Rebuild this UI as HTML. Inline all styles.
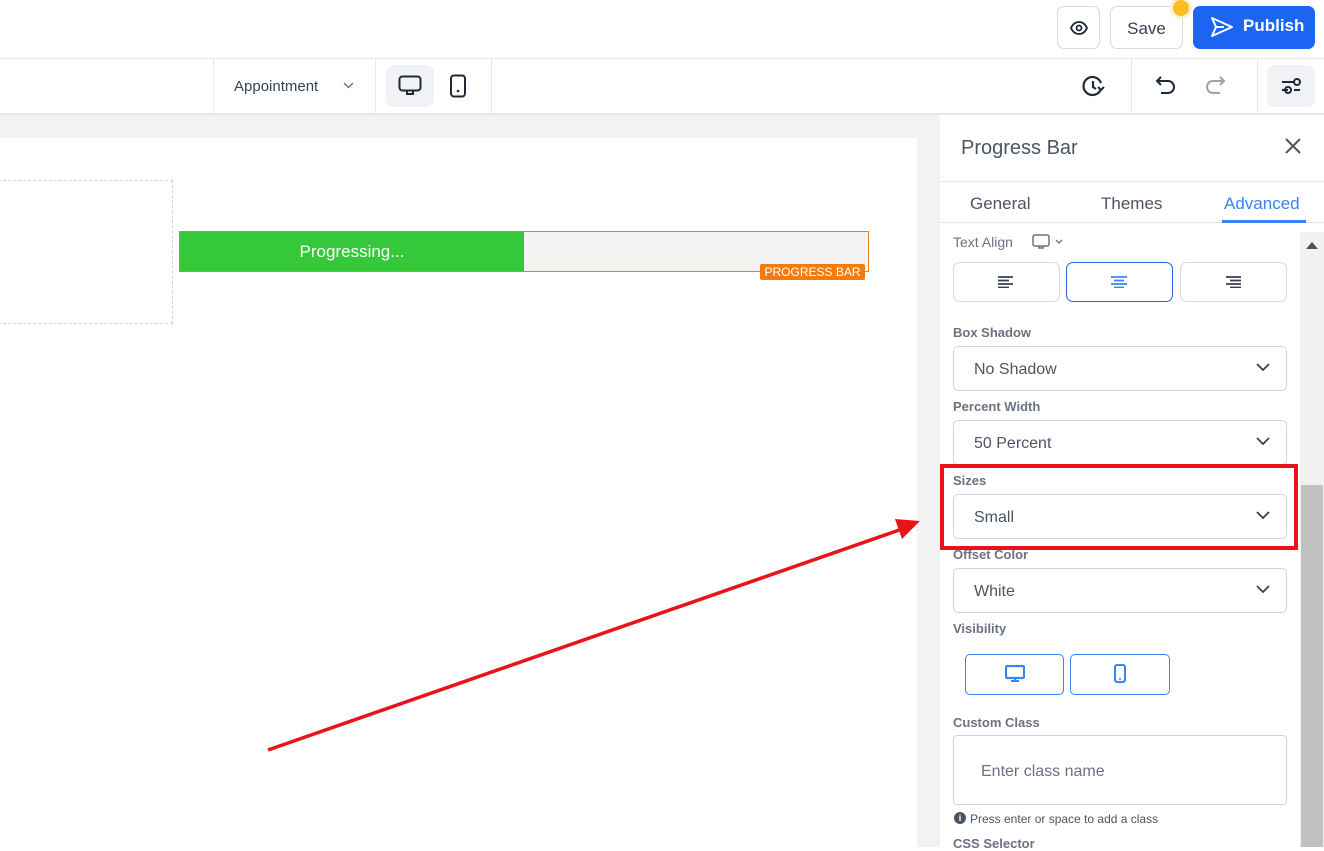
<!DOCTYPE html>
<html><head><style>
*{box-sizing:border-box;margin:0;padding:0}
body{width:1324px;height:847px;overflow:hidden;font-family:"Liberation Sans",sans-serif;background:#fff;position:relative;color:#374151}
.abs{position:absolute}
.lbl{position:absolute;left:953px;font-size:13px;font-weight:bold;color:#6b7280}
.sel{position:absolute;left:953px;width:334px;height:45px;border:1px solid #d1d5db;border-radius:5px;font-size:16px;color:#4b5563;padding:14px 0 0 20px}
.sel svg{position:absolute;right:16px;top:16px}
.ab{position:absolute;top:262px;width:107px;height:40px;border:1px solid #d6d9de;border-radius:7px}
</style></head><body>
<div class="abs" style="left:0;top:58px;width:1324px;height:1px;background:#e5e7eb"></div>
<div class="abs" style="left:1057px;top:6px;width:43px;height:43px;border:1px solid #d6d9de;border-radius:7px"><svg style="position:absolute;left:12px;top:13px" width="18" height="16" viewBox="0 0 18 16"><path d="M1 8C3 3.5 6 2 9 2s6 1.5 8 6c-2 4.5-5 6-8 6s-6-1.5-8-6z" fill="none" stroke="#1f2937" stroke-width="1.8"/><circle cx="9" cy="8" r="2.5" fill="none" stroke="#1f2937" stroke-width="1.8"/></svg></div>
<div class="abs" style="left:1110px;top:6px;width:73px;height:43px;border:1px solid #d6d9de;border-radius:7px;font-size:17px;color:#374151;text-align:center;line-height:43px">Save</div>
<div class="abs" style="left:1173px;top:0;width:16px;height:16px;border-radius:50%;background:#fbbf24;box-shadow:0 0 0 3px #fdf0d0"></div>
<div class="abs" style="left:1193px;top:6px;width:122px;height:43px;background:#1c64f2;border-radius:7px;color:#fff;font-size:17px;font-weight:bold;line-height:40px;padding-left:50px">Publish</div>
<svg class="abs" style="left:1210px;top:16px" width="24" height="22" viewBox="0 0 24 22"><path d="M2 2l20 9-20 9 4-9z M6 11h8" fill="none" stroke="#fff" stroke-width="2" stroke-linejoin="round"/></svg>
<div class="abs" style="left:0;top:113px;width:1324px;height:2px;background:#e5e7eb"></div>
<div class="abs" style="left:213px;top:59px;width:1px;height:54px;background:#e5e7eb"></div>
<div class="abs" style="left:375px;top:59px;width:1px;height:54px;background:#e5e7eb"></div>
<div class="abs" style="left:491px;top:59px;width:1px;height:54px;background:#e5e7eb"></div>
<div class="abs" style="left:1131px;top:59px;width:1px;height:54px;background:#e5e7eb"></div>
<div class="abs" style="left:1257px;top:59px;width:1px;height:54px;background:#e5e7eb"></div>
<div class="abs" style="left:234px;top:78px;font-size:15px;color:#374151">Appointment</div>
<svg class="abs" style="left:343px;top:82px" width="11" height="7"><path d="M1 1l4.5 4.5L10 1" fill="none" stroke="#6b7280" stroke-width="1.4"/></svg>
<div class="abs" style="left:386px;top:65px;width:48px;height:42px;background:#f1f2f5;border-radius:8px"></div>
<svg class="abs" style="left:398px;top:75px" width="24" height="22"><rect x="1.5" y="1.5" width="21" height="14" rx="3" fill="none" stroke="#1f2937" stroke-width="2"/><path d="M9 16v3h6v-3" fill="none" stroke="#1f2937" stroke-width="2"/></svg>
<svg class="abs" style="left:449px;top:74px" width="18" height="24"><rect x="2" y="1.5" width="14" height="21" rx="3" fill="none" stroke="#1f2937" stroke-width="2"/><circle cx="9" cy="17" r="1.3" fill="#1f2937"/></svg>
<svg class="abs" style="left:1082px;top:75px" width="24" height="22" viewBox="0 0 24 22"><path d="M19 8A9 9 0 1 0 19 14" fill="none" stroke="#1f2937" stroke-width="2.2"/><path d="M11 6v6l3 2" fill="none" stroke="#1f2937" stroke-width="2.2"/><path d="M16 12l3 3 3-3" fill="none" stroke="#1f2937" stroke-width="2"/></svg>
<svg class="abs" style="left:1155px;top:75px" width="22" height="20"><path d="M6 2L2 6l4 4M2 6h11a6 6 0 0 1 0 12H6" fill="none" stroke="#1f2937" stroke-width="2"/></svg>
<svg class="abs" style="left:1204px;top:75px" width="22" height="20"><path d="M16 2l4 4-4 4M20 6H9a6 6 0 0 0 0 12h7" fill="none" stroke="#9ca3af" stroke-width="2"/></svg>
<div class="abs" style="left:1267px;top:65px;width:48px;height:42px;background:#f1f2f5;border-radius:8px"></div>
<svg class="abs" style="left:1280px;top:76px" width="22" height="20"><path d="M2 6h12M2 14h6M14 14h6" stroke="#1f2937" stroke-width="2"/><circle cx="17" cy="6" r="3" fill="none" stroke="#1f2937" stroke-width="2"/><circle cx="8" cy="14" r="3" fill="none" stroke="#1f2937" stroke-width="2"/></svg>
<div class="abs" style="left:0;top:115px;width:940px;height:732px;background:#f1f2f4"></div>
<div class="abs" style="left:0;top:138px;width:917px;height:709px;background:#fff"></div>
<div class="abs" style="left:-2px;top:180px;width:175px;height:144px;border:1px dashed #d1d5db"></div>
<div class="abs" style="left:179px;top:231px;width:690px;height:41px;border:1px solid #f0801e;background:#f3f3f3"></div>
<div class="abs" style="left:180px;top:232px;width:344px;height:39px;background:#35c83a;color:#fff;font-size:17px;text-align:center;line-height:39px">Progressing...</div>
<div class="abs" style="left:760px;top:264px;width:105px;height:16px;background:#f47b0e;color:#fff;font-size:12px;text-align:center;line-height:16px;border-radius:2px">PROGRESS BAR</div>
<div class="abs" style="left:940px;top:115px;width:384px;height:732px;background:#fff"></div>
<div class="abs" style="left:961px;top:137px;font-size:20px;color:#4b5563">Progress Bar</div>
<svg class="abs" style="left:1285px;top:138px" width="16" height="16"><path d="M1 1l14 14M15 1L1 15" stroke="#4b5563" stroke-width="2"/></svg>
<div class="abs" style="left:940px;top:181px;width:384px;height:1px;background:#e5e7eb"></div>
<div class="abs" style="left:940px;top:222px;width:384px;height:1px;background:#e5e7eb"></div>
<div class="abs" style="left:970px;top:194px;font-size:17px;color:#4b5563">General</div>
<div class="abs" style="left:1101px;top:194px;font-size:17px;color:#4b5563">Themes</div>
<div class="abs" style="left:1224px;top:194px;font-size:17px;color:#3b82f6">Advanced</div>
<div class="abs" style="left:1222px;top:220px;width:84px;height:3px;background:#3b82f6"></div>
<div class="abs" style="left:1300px;top:232px;width:24px;height:615px;background:#f1f1f1"></div>
<div class="abs" style="left:1301px;top:485px;width:22px;height:362px;background:#c1c1c1"></div>
<svg class="abs" style="left:1306px;top:242px" width="12" height="7"><path d="M0 7L6 0l6 7z" fill="#505050"/></svg>
<div class="abs" style="left:953px;top:234px;font-size:14px;color:#6b7280">Text Align</div>
<svg class="abs" style="left:1032px;top:234px" width="36" height="16"><rect x="1" y="1" width="16" height="11" rx="2" fill="none" stroke="#6b7280" stroke-width="1.5"/><path d="M7 12v2h4v-2" fill="none" stroke="#6b7280" stroke-width="1.5"/><path d="M24 6l3 3 3-3" fill="none" stroke="#6b7280" stroke-width="1.3"/></svg>
<div class="ab" style="left:953px"></div>
<div class="ab" style="left:1066px;border-color:#2563eb"></div>
<div class="ab" style="left:1180px"></div>
<svg class="abs" style="left:998px;top:276px" width="16" height="12"><path d="M0 1h15M0 4.5h11M0 8h15M0 11.5h11" stroke="#374151" stroke-width="1.8"/></svg>
<svg class="abs" style="left:1111px;top:276px" width="16" height="12"><path d="M0 1h16M3 4.5h10M0 8h16M3 11.5h10" stroke="#3b82f6" stroke-width="1.8"/></svg>
<svg class="abs" style="left:1226px;top:276px" width="16" height="12"><path d="M0 1h15M4 4.5h11M0 8h15M4 11.5h11" stroke="#374151" stroke-width="1.8"/></svg>
<div class="lbl" style="top:325px">Box Shadow</div>
<div class="sel" style="top:346px">No Shadow<svg width="14" height="8"><path d="M1 1l6 6 6-6" fill="none" stroke="#374151" stroke-width="1.8"/></svg></div>
<div class="lbl" style="top:399px">Percent Width</div>
<div class="sel" style="top:420px">50 Percent<svg width="14" height="8"><path d="M1 1l6 6 6-6" fill="none" stroke="#374151" stroke-width="1.8"/></svg></div>
<div class="lbl" style="top:473px">Sizes</div>
<div class="sel" style="top:494px">Small<svg width="14" height="8"><path d="M1 1l6 6 6-6" fill="none" stroke="#374151" stroke-width="1.8"/></svg></div>
<div class="lbl" style="top:547px">Offset Color</div>
<div class="sel" style="top:568px">White<svg width="14" height="8"><path d="M1 1l6 6 6-6" fill="none" stroke="#374151" stroke-width="1.8"/></svg></div>
<div class="lbl" style="top:621px">Visibility</div>
<div class="abs" style="left:965px;top:654px;width:99px;height:41px;border:1px solid #3b82f6;border-radius:5px"></div>
<div class="abs" style="left:1070px;top:654px;width:100px;height:41px;border:1px solid #3b82f6;border-radius:5px"></div>
<svg class="abs" style="left:1005px;top:665px" width="20" height="18"><rect x="1" y="1" width="18" height="12" rx="1" fill="none" stroke="#3b82f6" stroke-width="2.2"/><path d="M6 16h8M10 13v3" stroke="#3b82f6" stroke-width="2"/></svg>
<svg class="abs" style="left:1114px;top:664px" width="12" height="19"><rect x="1" y="1" width="10" height="17" rx="2" fill="none" stroke="#3b82f6" stroke-width="2"/><circle cx="6" cy="15" r="1" fill="#3b82f6"/></svg>
<div class="lbl" style="top:715px">Custom Class</div>
<div class="abs" style="left:953px;top:735px;width:334px;height:70px;border:1px solid #d1d5db;border-radius:4px;font-size:16px;color:#6b7280;padding:27px 0 0 27px">Enter class name</div>
<div class="abs" style="left:954px;top:812px;width:12px;height:12px;border-radius:50%;background:#4b5563;color:#fff;font-size:9px;font-weight:bold;text-align:center;line-height:12px">i</div>
<div class="abs" style="left:970px;top:812px;font-size:12px;color:#4b5563">Press enter or space to add a class</div>
<div class="lbl" style="top:836px">CSS Selector</div>
<div class="abs" style="left:940px;top:464px;width:358px;height:86px;border:4px solid #e8141b"></div>
<svg class="abs" style="left:0;top:0" width="1324" height="847"><path d="M268 750L905 528" stroke="#e8141b" stroke-width="3.5"/><path d="M920 521L895 519L902 539z" fill="#e8141b"/></svg>
</body></html>
